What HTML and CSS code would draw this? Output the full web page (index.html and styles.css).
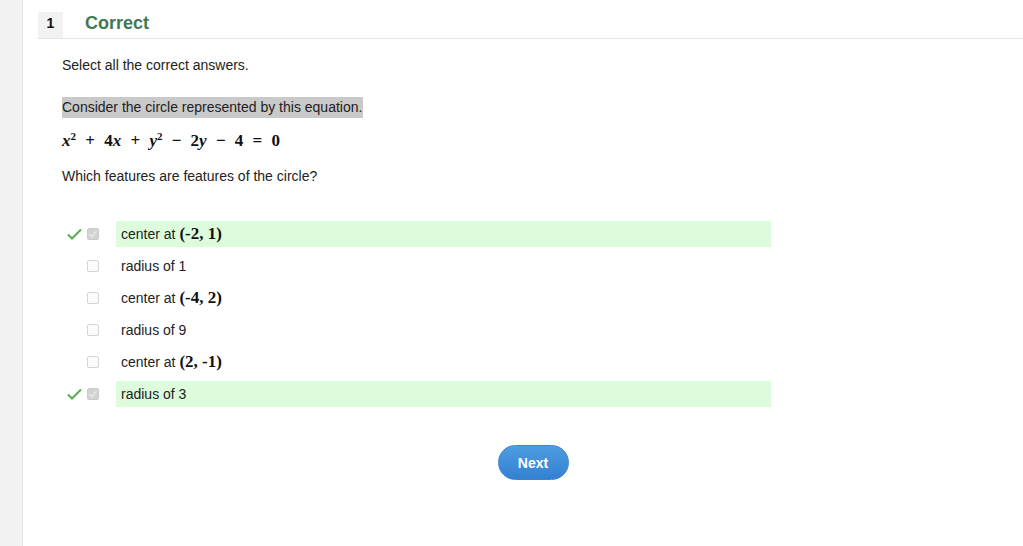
FILE: index.html
```html
<!DOCTYPE html>
<html lang="en">

<head>
    <meta charset="UTF-8">
    <title>Question 1</title>
    <link rel="stylesheet" href="styles.css">
</head>

<body>
    <div class="sidebar"></div>

    <div class="main">
        <!-- question header -->
        <div class="qhead">
            <div class="qnum">1</div>
            <div class="qstatus">Correct</div>
        </div>

        <div class="content">
            <p class="prompt">Select all the correct answers.</p>
            <p class="stem"><span class="hl">Consider the circle represented by this equation.</span></p>
            <p class="eq">
                <i>x</i><sup>2</sup> <span class="op">+</span> 4<i>x</i> <span class="op">+</span> <i>y</i><sup>2</sup>
                <span class="op">&minus;</span> 2<i>y</i> <span class="op">&minus;</span> 4 <span class="op">=</span> 0
            </p>
            <p class="ask">Which features are features of the circle?</p>

            <ul class="options">
                <li class="opt right">
                    <span class="mark"><svg width="15" height="12" viewBox="0 0 15 12"><path d="M1 6.5 L5 10.5 L14 1.5" fill="none" stroke="#5aa95a" stroke-width="2"/></svg></span>
                    <span class="box checked"><svg width="12" height="12" viewBox="0 0 12 12"><path d="M2.5 6 L5 8.5 L9.5 3" fill="none" stroke="#e6e6e6" stroke-width="1.6"/></svg></span>
                    <span class="label">center at <span class="m">(-2, 1)</span></span>
                </li>
                <li class="opt">
                    <span class="mark"></span>
                    <span class="box"></span>
                    <span class="label">radius of 1</span>
                </li>
                <li class="opt">
                    <span class="mark"></span>
                    <span class="box"></span>
                    <span class="label">center at <span class="m">(-4, 2)</span></span>
                </li>
                <li class="opt">
                    <span class="mark"></span>
                    <span class="box"></span>
                    <span class="label">radius of 9</span>
                </li>
                <li class="opt">
                    <span class="mark"></span>
                    <span class="box"></span>
                    <span class="label">center at <span class="m">(2, -1)</span></span>
                </li>
                <li class="opt right">
                    <span class="mark"><svg width="15" height="12" viewBox="0 0 15 12"><path d="M1 6.5 L5 10.5 L14 1.5" fill="none" stroke="#5aa95a" stroke-width="2"/></svg></span>
                    <span class="box checked"><svg width="12" height="12" viewBox="0 0 12 12"><path d="M2.5 6 L5 8.5 L9.5 3" fill="none" stroke="#e6e6e6" stroke-width="1.6"/></svg></span>
                    <span class="label">radius of 3</span>
                </li>
            </ul>

            <div class="actions">
                <button class="next">Next</button>
            </div>
        </div>
    </div>
</body>

</html>
```

FILE: styles.css
```css
/* general */

body {
    margin: 0;
    font-family: 'Liberation Sans', Arial, sans-serif;
    font-size: 14px;
    color: #222;
    background: #fff;
    display: flex;
    height: 546px;
    overflow: hidden;
}

.sidebar {
    width: 22px;
    flex-shrink: 0;
    background: #f2f2f2;
    border-right: 1px solid #e8e8e8;
}

.main {
    flex: 1;
    padding: 12px 0 0 15px;
}

/* header */

.qhead {
    display: flex;
    align-items: center;
    height: 26px;
    border-bottom: 1px solid #e3e3e3;
}

.qnum {
    width: 25px;
    height: 26px;
    line-height: 22px;
    text-align: center;
    background: #f2f2f2;
    font-weight: bold;
    font-size: 14px;
    color: #111;
}

.qstatus {
    margin-left: 22px;
    padding-bottom: 4px;
    font-size: 18px;
    font-weight: bold;
    color: #3d7a4f;
}

/* question body */

.content {
    padding-left: 24px;
}

.content p {
    margin: 0;
    line-height: 18px;
}

.prompt {
    padding-top: 17px;
}

.stem {
    margin-top: 23px !important;
}

.hl {
    background: #c9c9c9;
    display: inline-block;
    line-height: 21px;
    padding-right: 1px;
}

.eq {
    margin-top: 11px !important;
    font-family: 'Liberation Serif', 'DejaVu Serif', serif;
    font-size: 17px;
    font-weight: bold;
    line-height: 24px !important;
    color: #111;
    word-spacing: 1px;
}

.eq i {
    font-style: italic;
}

.eq sup {
    font-size: 11px;
    vertical-align: 6px;
    line-height: 0;
}

.eq .op {
    margin: 0 4px;
}

.ask {
    margin-top: 14px !important;
}

/* options */

.options {
    list-style: none;
    margin: 36px 0 0 0;
    padding: 0;
}

.opt {
    display: flex;
    align-items: center;
    height: 26px;
    margin-bottom: 6px;
}

.mark {
    width: 25px;
    padding-left: 5px;
    box-sizing: border-box;
    display: flex;
    align-items: center;
}

.box {
    width: 12px;
    height: 12px;
    box-sizing: border-box;
    border: 1px solid #d4d4d4;
    border-radius: 2px;
    background: #fbfbfb;
    display: flex;
}

.box.checked {
    background: #d2d2d2;
    border-color: #cacaca;
}

.box svg {
    margin: -1px;
}

.label {
    margin-left: 17px;
    width: 655px;
    height: 26px;
    line-height: 26px;
    padding-left: 5px;
    box-sizing: border-box;
}

.right .label {
    background: #dcfcdc;
}

.m {
    font-family: 'Liberation Serif', 'DejaVu Serif', serif;
    font-size: 17px;
    font-weight: bold;
    color: #111;
}

/* button */

.actions {
    margin-top: 38px;
    margin-right: 19px;
    text-align: center;
}

.next {
    width: 71px;
    height: 35px;
    border: 1px solid #3a86d4;
    border-radius: 18px;
    background: linear-gradient(#4d9de2, #3480d1);
    color: #fff;
    font-family: 'Liberation Sans', Arial, sans-serif;
    font-weight: bold;
    font-size: 14px;
    cursor: pointer;
}
```
